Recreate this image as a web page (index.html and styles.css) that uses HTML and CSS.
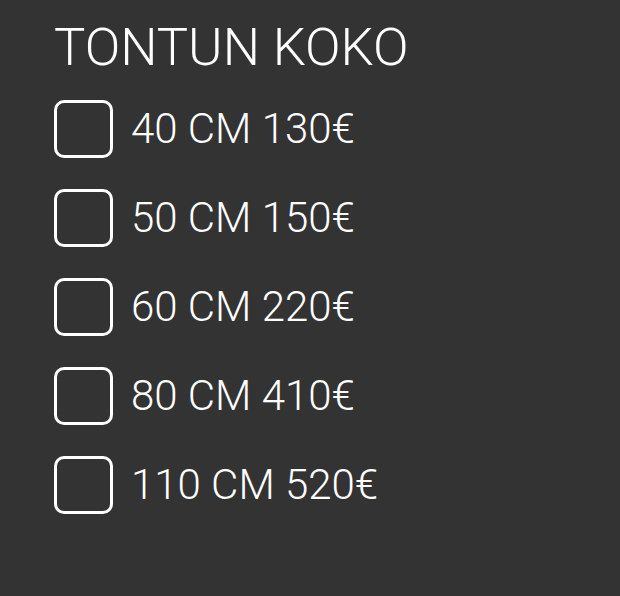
FILE: index.html
```html
<!DOCTYPE html>
<html>
<head>
<meta charset="utf-8">
<link rel="stylesheet" href="styles.css">
</head>
<body>
<div class="panel">
  <h1 class="title">TONTUN KOKO</h1>
  <ul class="options">
    <li class="option"><span class="box"></span><span class="label">40 CM 130€</span></li>
    <li class="option"><span class="box"></span><span class="label">50 CM 150€</span></li>
    <li class="option"><span class="box"></span><span class="label">60 CM 220€</span></li>
    <li class="option"><span class="box"></span><span class="label">80 CM 410€</span></li>
    <li class="option"><span class="box"></span><span class="label">110 CM 520€</span></li>
  </ul>
</div>
</body>
</html>
```
FILE: styles.css
```css
html, body {
  margin: 0;
  padding: 0;
  background: #333333;
  width: 620px;
  height: 596px;
  overflow: hidden;
}
.panel {
  padding: 18px 0 0 54px;
  font-family: Roboto, "Liberation Sans", sans-serif;
  font-weight: 300;
  color: #ffffff;
}
.title {
  margin: 0;
  font-size: 52.5px;
  font-weight: 300;
  line-height: 58px;
}
.options {
  list-style: none;
  margin: 24px 0 0 0;
  padding: 0;
  display: flex;
  flex-direction: column;
  gap: 31px;
}
.option {
  display: flex;
  align-items: center;
  gap: 18px;
  height: 58px;
}
.box {
  width: 59px;
  height: 58px;
  box-sizing: border-box;
  border: 3px solid #ffffff;
  border-radius: 10px;
  flex: none;
}
.label {
  font-size: 42px;
  line-height: 48px;
}
```
